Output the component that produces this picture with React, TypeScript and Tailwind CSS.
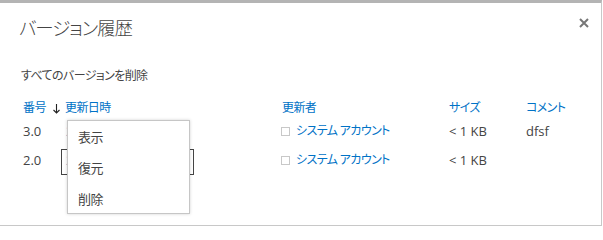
const jp = "font-['Segoe_UI','Open_Sans','Noto_Sans_CJK_JP',sans-serif] [font-feature-settings:'palt']";
const cjk = "text-[12px] tracking-[-0.6px] whitespace-nowrap";
const lat = "text-[13px] tracking-normal whitespace-nowrap";

const rows = [
  { no: "3.0", date: "2018/03/05 10:21", size: "< 1 KB", comment: "dfsf" },
  { no: "2.0", date: "2018/03/05 10:20", size: "< 1 KB", comment: "" },
];

export default function App() {
  return (
    <div className={`w-[603px] h-[227px] bg-white overflow-hidden ${jp}`}>
      <div className="w-[602px] h-[226px] border-t-[3px] border-t-[#b4b4b4] border-r border-r-[#c8c8c8] border-b border-b-[#c8c8c8] flex flex-col">
        {/* ヘッダー */}
        <div className="flex items-start justify-between pl-[19px] pr-[12px] pt-[12px]">
          <h1 className="text-[18.5px] leading-[26px] font-light text-[#444] tracking-[-1.1px] whitespace-nowrap">
            バージョン履歴
          </h1>
          <button type="button" className="mt-[3px]">
            <svg width="10" height="10" viewBox="0 0 10 10">
              <path d="M1 1 L9 9 M9 1 L1 9" stroke="#777" strokeWidth="2" />
            </svg>
          </button>
        </div>

        <div className={`pl-[21px] pt-[27px] leading-[16px] text-[#444] ${cjk}`}>
          すべてのバージョンを削除
        </div>

        {/* テーブル */}
        <div className="relative mt-[16px]">
          <div className={`grid grid-cols-[42px_217px_167px_77px_1fr] pl-[23px] leading-[16px] text-[#0072c6] ${cjk}`}>
            <div className="flex items-center gap-[7px]">
              番号
              <svg width="7" height="10" viewBox="0 0 7 10" className="mt-[1px]">
                <path d="M3.5 0 V9 M0.5 6 L3.5 9 L6.5 6" stroke="#222" strokeWidth="1.1" fill="none" />
              </svg>
            </div>
            <div>更新日時</div>
            <div>更新者</div>
            <div>サイズ</div>
            <div>コメント</div>
          </div>

          {rows.map((r, i) => (
            <div
              key={r.no}
              className={`grid grid-cols-[42px_217px_167px_77px_1fr] pl-[23px] leading-[16px] ${i === 0 ? "mt-[7px]" : "mt-[13px]"}`}
            >
              <div className={`text-[#444] ${lat}`}>{r.no}</div>
              <div className={`text-[#0072c6] pl-[1px] truncate ${lat}`}>{r.date}</div>
              <div className="flex items-center gap-[6px] -ml-[1px]">
                <span className="w-[9px] h-[9px] border border-[#c8c8c8] bg-white" />
                <span className={`text-[#0072c6] ${cjk}`}>システム アカウント</span>
              </div>
              <div className={`text-[#444] ${lat}`}>{r.size}</div>
              <div className={`text-[#444] ${lat}`}>{r.comment}</div>
            </div>
          ))}

          {/* 選択中セルの枠 */}
          <div className="absolute left-[61px] top-[49px] w-[133px] h-[26px] border border-[#444]" />

          {/* コンテキストメニュー */}
          <div className={`absolute left-[67px] top-[20px] w-[123px] h-[94px] bg-white border border-[#c6c6c6] shadow-[0_0_3px_rgba(0,0,0,0.18)] py-[8px] text-[#444] ${cjk} text-[13px]`}>
            <div className="pl-[10px] h-[31px] leading-[16px]">表示</div>
            <div className="pl-[10px] h-[31px] leading-[16px]">復元</div>
            <div className="pl-[10px] h-[31px] leading-[16px]">削除</div>
          </div>
        </div>
      </div>
    </div>
  );
}
